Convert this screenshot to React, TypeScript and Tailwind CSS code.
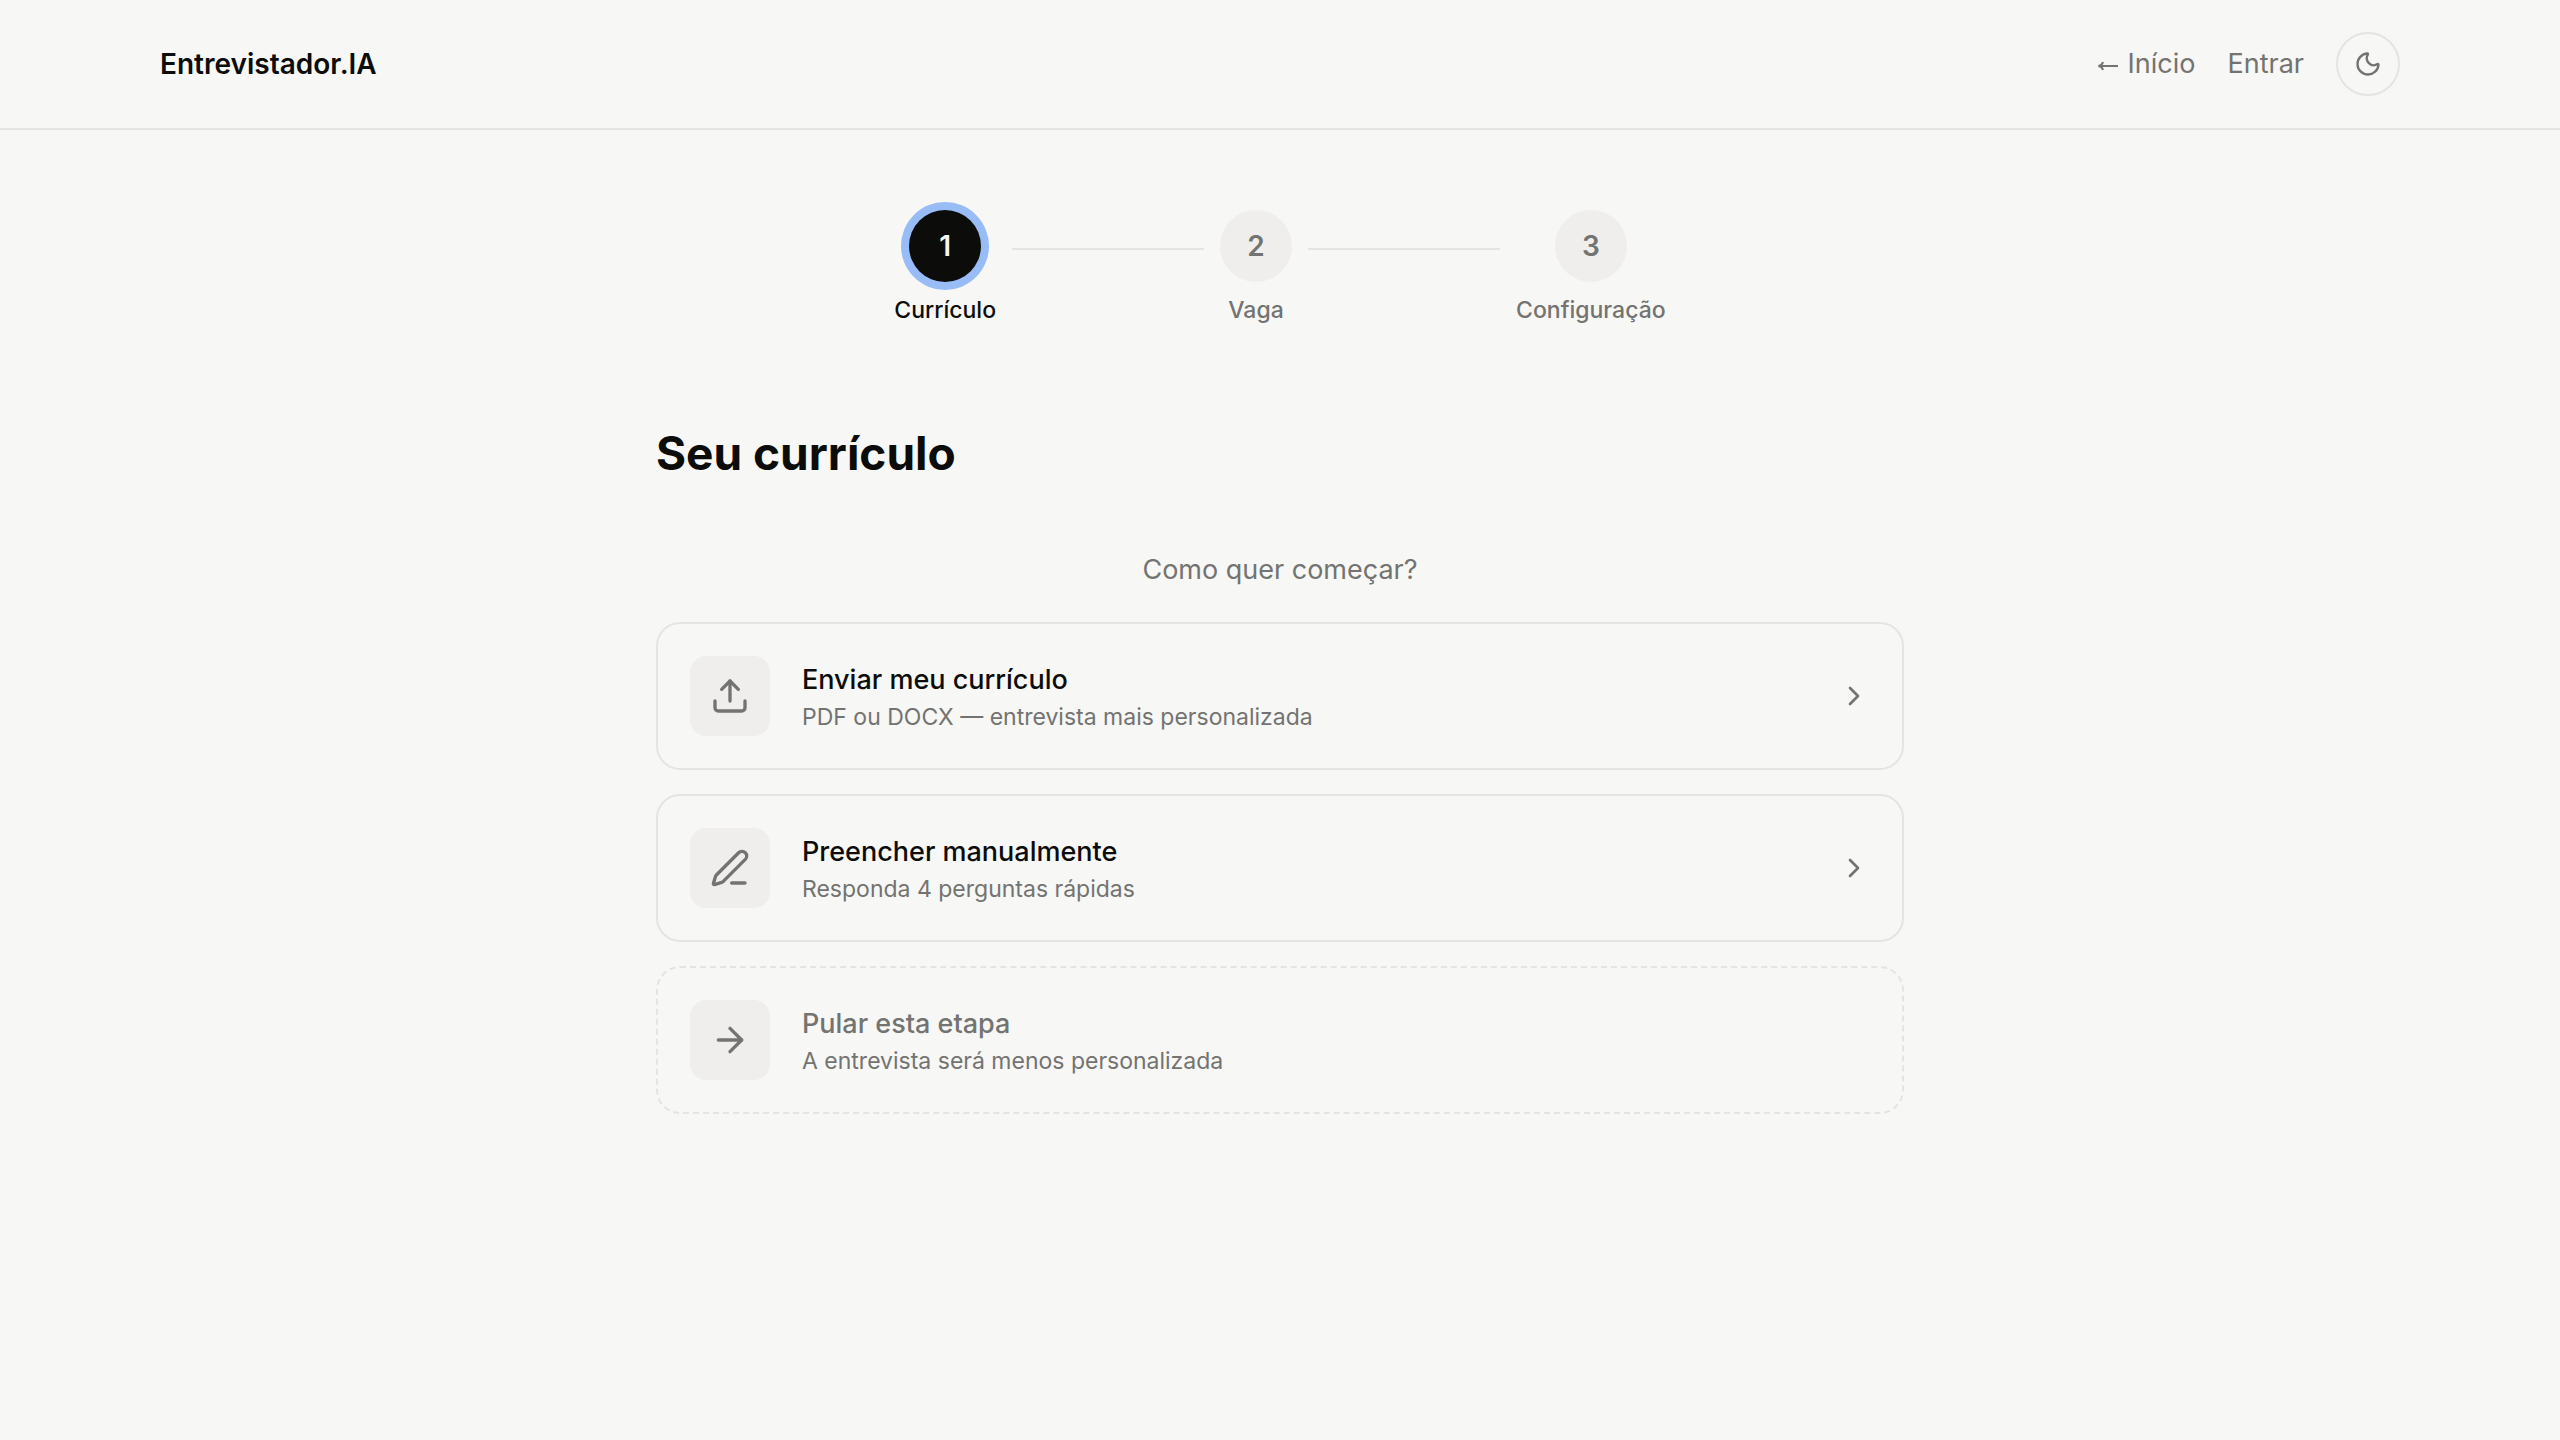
import React, { Fragment } from "react";
import { ArrowRight, ChevronRight, Moon, PenLine, Upload, type LucideIcon } from "lucide-react";

type Step = { number: number; label: string; active?: boolean };

const steps: Step[] = [
  { number: 1, label: "Currículo", active: true },
  { number: 2, label: "Vaga" },
  { number: 3, label: "Configuração" },
];

type Option = { icon: LucideIcon; title: string; description: string; skip?: boolean };

const options: Option[] = [
  { icon: Upload, title: "Enviar meu currículo", description: "PDF ou DOCX — entrevista mais personalizada" },
  { icon: PenLine, title: "Preencher manualmente", description: "Responda 4 perguntas rápidas" },
  { icon: ArrowRight, title: "Pular esta etapa", description: "A entrevista será menos personalizada", skip: true },
];

function BackArrow() {
  return (
    <svg
      viewBox="0 0 20 12"
      aria-hidden="true"
      className="mt-1 h-3 w-5"
      fill="none"
      stroke="currentColor"
      strokeWidth="2"
    >
      <path d="M20 6H1M5 2C4.500 4 3 5.500 .5 6c2.500.5 4 2 4.500 4" />
    </svg>
  );
}

function Header() {
  return (
    <header className="border-b-2 border-[#e4e4e2]">
      <div className="mx-auto flex h-32 max-w-[2304px] items-center justify-between px-8">
        <a href="#" className="text-[28px] leading-10 font-semibold">
          Entrevistador.IA
        </a>
        <nav className="flex items-center gap-8 text-[27px] leading-10 text-[#737371]">
          <a href="#" className="flex items-center gap-2.5">
            <BackArrow />
            Início
          </a>
          <a href="#">Entrar</a>
          <button
            type="button"
            aria-label="Alternar tema"
            className="flex size-16 items-center justify-center rounded-full border-2 border-[#e4e4e2]"
          >
            <Moon className="size-7" />
          </button>
        </nav>
      </div>
    </header>
  );
}

function Stepper() {
  return (
    <ol className="flex items-center justify-center gap-4">
      {steps.map((step, index) => (
        <Fragment key={step.number}>
          {index > 0 && <li aria-hidden="true" className="mb-[38px] h-0.5 w-48 bg-[#e4e4e2]" />}
          <li
            aria-current={step.active ? "step" : undefined}
            className={`flex flex-col items-center gap-3 ${step.active ? "text-[#0c0c0a]" : "text-[#737371]"}`}
          >
            <span
              className={`flex size-18 items-center justify-center rounded-full text-[28px] leading-10 font-semibold ${
                step.active ? "bg-[#0c0c0a] text-[#f7f7f5] ring-8 ring-[#98bdf6]" : "bg-[#efeeec]"
              }`}
            >
              {step.number}
            </span>
            <span className="text-[23px] leading-8 font-medium">{step.label}</span>
          </li>
        </Fragment>
      ))}
    </ol>
  );
}

function OptionCard({ icon: Icon, title, description, skip }: Option) {
  return (
    <button
      type="button"
      className={`flex w-full items-center gap-8 rounded-3xl border-2 border-[#e4e4e2] p-8 text-left ${
        skip ? "border-dashed" : ""
      }`}
    >
      <span className="flex size-20 shrink-0 items-center justify-center rounded-2xl bg-[#efeeec] text-[#737371]">
        <Icon className="size-10" />
      </span>
      <span className="flex flex-1 flex-col">
        <span className={`text-[27px] leading-[42px] font-medium ${skip ? "text-[#737371]" : ""}`}>{title}</span>
        <span className="text-[23px] leading-8 text-[#737371]">{description}</span>
      </span>
      {!skip && <ChevronRight className="size-8 shrink-0 text-[#737371]" />}
    </button>
  );
}

export default function App() {
  return (
    <div className="min-h-screen bg-[#f7f7f5] font-['Inter',sans-serif] text-[#0c0c0a]">
      <Header />
      <main className="mx-auto max-w-[1344px] px-12 py-20">
        <Stepper />
        <h1 className="mt-24 text-[46px] leading-[62px] font-bold">Seu currículo</h1>
        <section className="mt-[66px]">
          <p className="text-center text-[27px] leading-10 text-[#737371]">Como quer começar?</p>
          <div className="mt-8 flex flex-col gap-6">
            {options.map((option) => (
              <OptionCard key={option.title} {...option} />
            ))}
          </div>
        </section>
      </main>
    </div>
  );
}
